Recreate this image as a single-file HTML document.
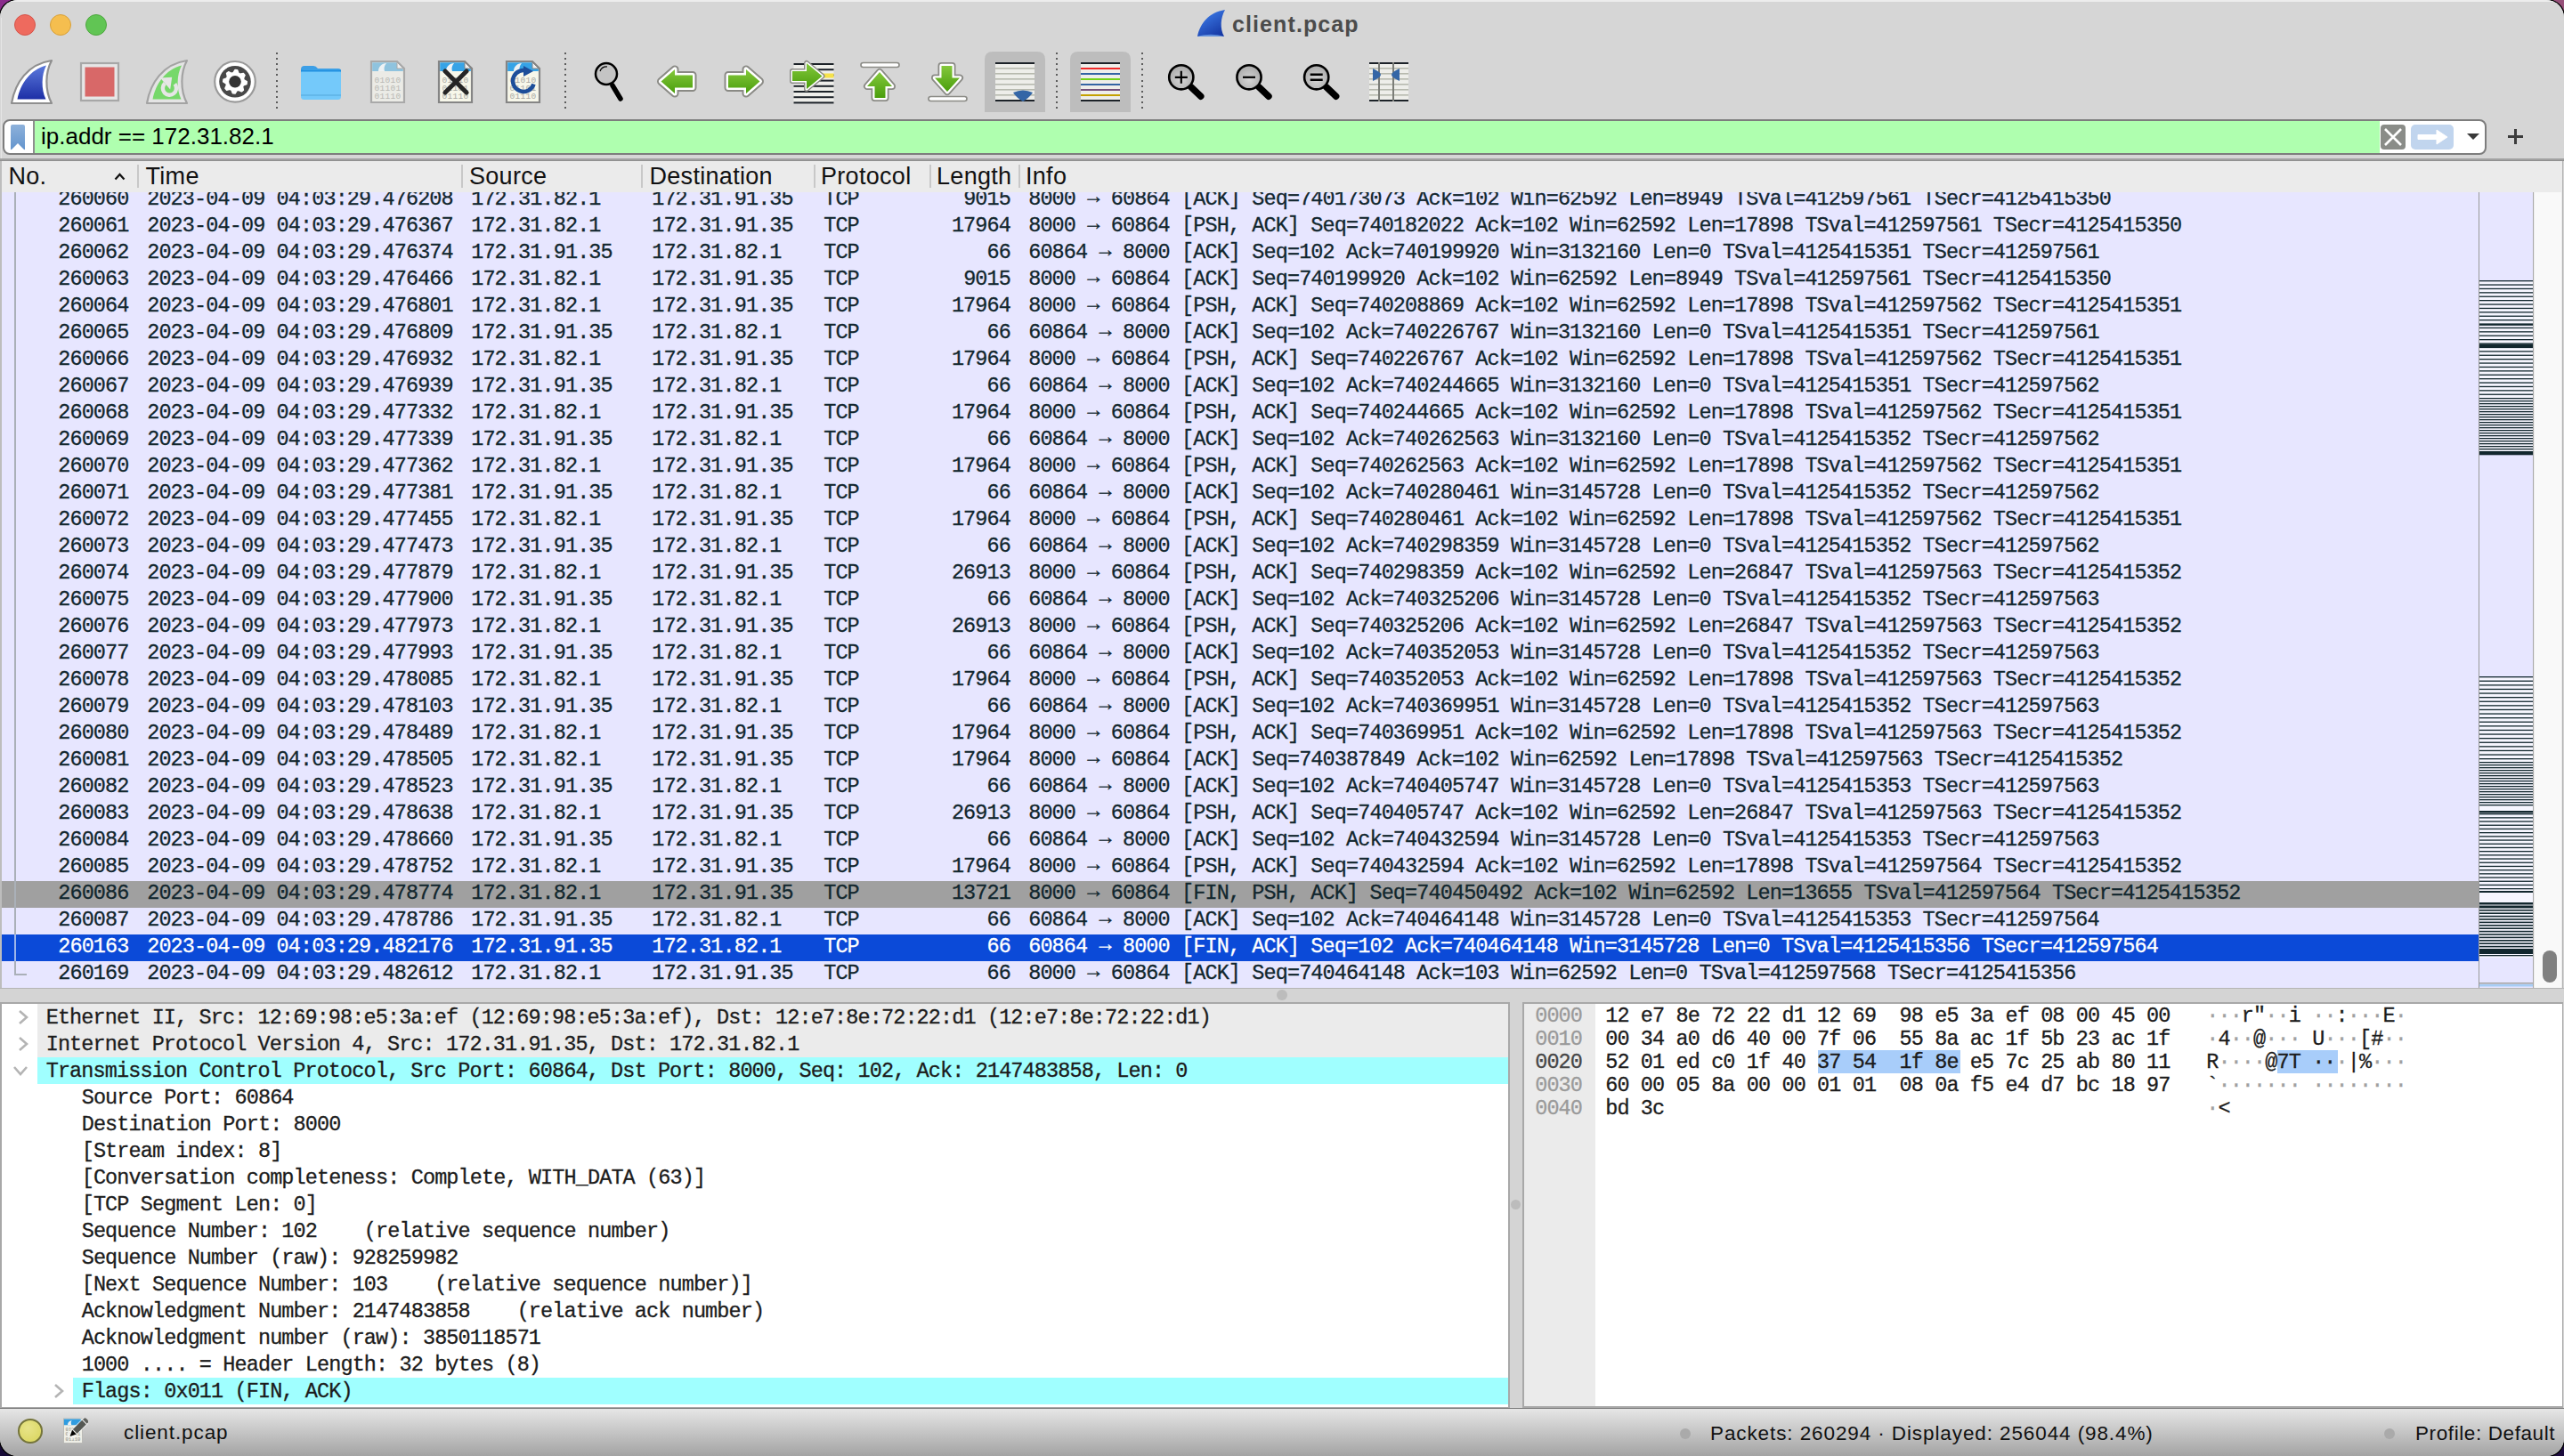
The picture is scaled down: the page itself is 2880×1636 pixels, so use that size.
<!DOCTYPE html><html><head><meta charset="utf-8"><title>client.pcap</title><style>
*{margin:0;padding:0;box-sizing:border-box}
html,body{width:2880px;height:1636px;overflow:hidden}
body{position:relative;background:#1a0b3a;font-family:"Liberation Sans",sans-serif}
#win{position:absolute;left:0;top:0;width:2880px;height:1636px;border-radius:20px;overflow:hidden;background:#d6d6d6;box-shadow:0 0 0 1.5px #000}
.a{position:absolute}
.t{position:absolute;white-space:pre;font-family:"Liberation Sans",sans-serif}
.m{position:absolute;white-space:pre;-webkit-text-stroke:0.3px currentColor;font-family:"Liberation Mono",monospace;font-size:23.5px;letter-spacing:-0.887px}
</style></head><body><div class="a" style="left:0;top:0;width:40px;height:40px;background:#8a2a8c"></div><div class="a" style="left:2840px;top:0;width:40px;height:40px;background:#97507a"></div><div class="a" style="left:0;top:1596px;width:40px;height:40px;background:#170a36"></div><div class="a" style="left:2840px;top:1596px;width:40px;height:40px;background:#1c0b3e"></div><div id="win"><div class="a" style="left:0;top:0;width:2880px;height:179px;background:#d6d6d6;border-top:2px solid #ededed"></div><div class="a" style="left:1px;top:20px;width:1px;height:159px;background:#e6e6e6"></div><div class="a" style="left:16px;top:15.8px;width:24px;height:24px;border-radius:50%;background:#ee6a5e;border:1px solid #d5544a"></div><div class="a" style="left:56px;top:15.8px;width:24px;height:24px;border-radius:50%;background:#f5be4f;border:1px solid #d7a03b"></div><div class="a" style="left:96px;top:15.8px;width:24px;height:24px;border-radius:50%;background:#61c554;border:1px solid #4ea73f"></div><div class="a" style="left:1344px;top:10px;width:33px;height:32px"><svg width="33" height="32" viewBox="0 0 33 32"><defs><linearGradient id="tg" x1="0.2" y1="0" x2="0.8" y2="1"><stop offset="0" stop-color="#3f80ec"/><stop offset="1" stop-color="#1536a2"/></linearGradient></defs><path d="M1,31 C4,16 14,4 32,1 C27,10 26,22 31,31 Z" fill="url(#tg)"/><path d="M1,31 C10,28 22,28 31,31 Z" fill="#7fb0f0" opacity="0.7"/></svg></div><div class="t" style="left:1384.00px;top:13.87px;font-size:25px;line-height:27.93px;color:#4b4b4b;font-weight:bold;letter-spacing:1.1px;">client.pcap</div><svg class="a" style="left:0;top:0" width="1600" height="130" viewBox="0 0 1600 130"><defs><linearGradient id="bg1" x1="0" y1="0" x2="0" y2="1"><stop offset="0" stop-color="#5b79dc"/><stop offset="1" stop-color="#1d2fa6"/></linearGradient><linearGradient id="gg" x1="0" y1="0" x2="0" y2="1"><stop offset="0" stop-color="#84c83c"/><stop offset="1" stop-color="#4a9e0c"/></linearGradient><radialGradient id="zg" cx="0.5" cy="0.6" r="0.6"><stop offset="0" stop-color="#d6d6d6"/><stop offset="1" stop-color="#a8a8a8"/></radialGradient></defs><path d="M13,116 C17,93 31,72 58,68 C51,81 50,101 58,116 Z" fill="#ffffff" stroke="#8f8f8f" stroke-width="2.2" stroke-linejoin="round"/><path d="M19.5,111.5 C23,94 34,78 52,73.5 C46.5,84 46,100 51.5,111.5 Z" fill="url(#bg1)"/><rect x="91" y="71" width="42" height="42" fill="#e6e6e6" stroke="#a7a7a7" stroke-width="2.2"/><rect x="95.5" y="75.5" width="33" height="33" fill="#d86868"/><path d="M165,116 C169,93 183,72 210,68 C203,81 202,101 210,116 Z" fill="#e4e4e4" stroke="#a3a3a3" stroke-width="2.2" stroke-linejoin="round"/><path d="M171.5,111.5 C175,94 186,78 204,73.5 C198.5,84 198,100 203.5,111.5 Z" fill="#76d86a"/><path d="M185.2,93.6 A7.6,7.6 0 1,0 196.4,94.4" fill="none" stroke="#e6e6e6" stroke-width="4.4"/><path d="M180,87.6 L193.2,86.8 L191.2,100.4 Z" fill="#e6e6e6"/><circle cx="264" cy="91.8" r="22.8" fill="#fff" stroke="#9a9a9a" stroke-width="2.2"/><circle cx="264" cy="91.8" r="17.8" fill="#484848"/><polygon points="262.01,81.80 264.00,78.60 266.58,78.85 267.90,82.38 269.67,83.32 273.33,82.47 274.98,84.47 273.42,87.90 274.00,89.81 277.20,91.80 276.95,94.38 273.42,95.70 272.48,97.47 273.33,101.13 271.33,102.78 267.90,101.22 265.99,101.80 264.00,105.00 261.42,104.75 260.10,101.22 258.33,100.28 254.67,101.13 253.02,99.13 254.58,95.70 254.00,93.79 250.80,91.80 251.05,89.22 254.58,87.90 255.52,86.13 254.67,82.47 256.67,80.82 260.10,82.38" fill="#fff" stroke="#fff" stroke-width="1.6" stroke-linejoin="round"/><circle cx="264" cy="91.8" r="6.8" fill="#333"/><path d="M338,78 Q338,74 342,74 H352 Q355,74 357,77 H380 Q383,77 383,80 V84 H338 Z" fill="#3d9fe6"/><rect x="338" y="78.5" width="45" height="33.5" rx="3.5" fill="#74c9fa"/><rect x="338" y="78.5" width="45" height="2" fill="#1f8fe0"/><rect x="338" y="106" width="45" height="2" fill="#63b8ea"/><path d="M417,69 H446 L454,77 V115 H417 Z" fill="#ebebe6" stroke="#a9a9a9" stroke-width="2.2"/><path d="M418.2,70.2 H445.5 L452.8,77.5 V80 H418.2 Z" fill="#8fc3de"/><path d="M446,70 V77 H453 Z" fill="#f0f0f0" stroke="#a9a9a9" stroke-width="1"/><path d="M425,80 C425,75 429,71 434,71 C431.5,74 431,77 432,80 Z" fill="#eef2f4"/><text x="435.5" y="93" text-anchor="middle" font-family="Liberation Mono" font-size="9.5" fill="#b8b8b4" letter-spacing="0.3">01010</text><text x="435.5" y="102" text-anchor="middle" font-family="Liberation Mono" font-size="9.5" fill="#b8b8b4" letter-spacing="0.3">01101</text><text x="435.5" y="111" text-anchor="middle" font-family="Liberation Mono" font-size="9.5" fill="#b8b8b4" letter-spacing="0.3">01110</text><path d="M493,69 H522 L530,77 V115 H493 Z" fill="#f7f7ea" stroke="#858585" stroke-width="2.2"/><path d="M494.2,70.2 H521.5 L528.8,77.5 V80 H494.2 Z" fill="#36a3e6"/><path d="M522,70 V77 H529 Z" fill="#f0f0f0" stroke="#858585" stroke-width="1"/><path d="M501,80 C501,75 505,71 510,71 C507.5,74 507,77 508,80 Z" fill="#eef2f4"/><text x="511.5" y="93" text-anchor="middle" font-family="Liberation Mono" font-size="9.5" fill="#a9a9a4" letter-spacing="0.3">01010</text><text x="511.5" y="102" text-anchor="middle" font-family="Liberation Mono" font-size="9.5" fill="#a9a9a4" letter-spacing="0.3">01101</text><text x="511.5" y="111" text-anchor="middle" font-family="Liberation Mono" font-size="9.5" fill="#a9a9a4" letter-spacing="0.3">01110</text><path d="M500,80 L524,104 M524,80 L500,104" stroke="#252525" stroke-width="5" stroke-linecap="round"/><path d="M569,69 H598 L606,77 V115 H569 Z" fill="#f7f7ea" stroke="#858585" stroke-width="2.2"/><path d="M570.2,70.2 H597.5 L604.8,77.5 V80 H570.2 Z" fill="#36a3e6"/><path d="M598,70 V77 H605 Z" fill="#f0f0f0" stroke="#858585" stroke-width="1"/><path d="M577,80 C577,75 581,71 586,71 C583.5,74 583,77 584,80 Z" fill="#eef2f4"/><text x="587.5" y="93" text-anchor="middle" font-family="Liberation Mono" font-size="9.5" fill="#a9a9a4" letter-spacing="0.3">01010</text><text x="587.5" y="102" text-anchor="middle" font-family="Liberation Mono" font-size="9.5" fill="#a9a9a4" letter-spacing="0.3">01101</text><text x="587.5" y="111" text-anchor="middle" font-family="Liberation Mono" font-size="9.5" fill="#a9a9a4" letter-spacing="0.3">01110</text><path d="M593,80 A12,12 0 1,0 599.5,94.5" fill="none" stroke="#1d4e9a" stroke-width="4.5"/><path d="M588,74 L599,80 L588,86 Z" fill="#1d4e9a"/><line x1="688" y1="96" x2="697" y2="111" stroke="#000" stroke-width="5.5" stroke-linecap="round"/><circle cx="681" cy="83" r="12" fill="#c4c4c4" stroke="#000" stroke-width="2.5"/><path d="M674,80 A8,8 0 0,1 682,75" fill="none" stroke="#000" stroke-width="1.2"/><path d="M742.5,91.5 L758,78 V84.5 H778 V98.5 H758 V105 Z" fill="none" stroke="#8a8a85" stroke-width="9" stroke-linejoin="round"/><path d="M742.5,91.5 L758,78 V84.5 H778 V98.5 H758 V105 Z" fill="none" stroke="#fff" stroke-width="5" stroke-linejoin="round"/><path d="M742.5,91.5 L758,78 V84.5 H778 V98.5 H758 V105 Z" fill="url(#gg)"/><path d="M853.5,91.5 L838,78 V84.5 H818 V98.5 H838 V105 Z" fill="none" stroke="#8a8a85" stroke-width="9" stroke-linejoin="round"/><path d="M853.5,91.5 L838,78 V84.5 H818 V98.5 H838 V105 Z" fill="none" stroke="#fff" stroke-width="5" stroke-linejoin="round"/><path d="M853.5,91.5 L838,78 V84.5 H818 V98.5 H838 V105 Z" fill="url(#gg)"/><rect x="891.5" y="71" width="45" height="45" fill="#eeeeea"/><rect x="891.5" y="71.0" width="45" height="2" fill="#1c2228"/><rect x="891.5" y="77.2" width="45" height="2" fill="#1c2228"/><rect x="891.5" y="83.4" width="45" height="2" fill="#1c2228"/><rect x="891.5" y="89.6" width="45" height="2" fill="#1c2228"/><rect x="891.5" y="95.8" width="45" height="2" fill="#1c2228"/><rect x="891.5" y="102.0" width="45" height="2" fill="#1c2228"/><rect x="891.5" y="108.2" width="45" height="2" fill="#1c2228"/><rect x="891.5" y="114.4" width="45" height="2" fill="#1c2228"/><rect x="924" y="82.5" width="12.5" height="5" fill="#f6e24a"/><path d="M923.5,85.5 L906,71 V80 H890 V91 H906 V100 Z" fill="none" stroke="#8a8a85" stroke-width="6" stroke-linejoin="round"/><path d="M923.5,85.5 L906,71 V80 H890 V91 H906 V100 Z" fill="none" stroke="#fff" stroke-width="3" stroke-linejoin="round"/><path d="M923.5,85.5 L906,71 V80 H890 V91 H906 V100 Z" fill="url(#gg)"/><rect x="967" y="70.5" width="43" height="5" rx="2.5" fill="#fff" stroke="#8a8a85" stroke-width="1.6"/><path d="M988,81 L974,97 H982.5 V110 H994.5 V97 H1002 Z" fill="none" stroke="#8a8a85" stroke-width="8" stroke-linejoin="round"/><path d="M988,81 L974,97 H982.5 V110 H994.5 V97 H1002 Z" fill="none" stroke="#fff" stroke-width="4.5" stroke-linejoin="round"/><path d="M988,81 L974,97 H982.5 V110 H994.5 V97 H1002 Z" fill="url(#gg)"/><rect x="1043" y="108.5" width="43" height="5" rx="2.5" fill="#fff" stroke="#8a8a85" stroke-width="1.6"/><path d="M1064,103 L1078,87.5 H1069.5 V74 H1057.5 V87.5 H1050 Z" fill="none" stroke="#8a8a85" stroke-width="8" stroke-linejoin="round"/><path d="M1064,103 L1078,87.5 H1069.5 V74 H1057.5 V87.5 H1050 Z" fill="none" stroke="#fff" stroke-width="4.5" stroke-linejoin="round"/><path d="M1064,103 L1078,87.5 H1069.5 V74 H1057.5 V87.5 H1050 Z" fill="url(#gg)"/><path d="M1106,126 V67 Q1106,58 1115,58 H1165 Q1174,58 1174,67 V126 Z" fill="#bdbdbd"/><rect x="1118" y="70" width="44" height="44" fill="#eeeeea"/><rect x="1118" y="70" width="44" height="2" fill="#1c2228"/><rect x="1118" y="112" width="44" height="2" fill="#1c2228"/><rect x="1118" y="76" width="44" height="1.6" fill="#b7b9ae"/><rect x="1118" y="82" width="44" height="1.6" fill="#b7b9ae"/><rect x="1118" y="88" width="44" height="1.6" fill="#b7b9ae"/><rect x="1118" y="94" width="44" height="1.6" fill="#b7b9ae"/><rect x="1118" y="100" width="44" height="1.6" fill="#b7b9ae"/><rect x="1118" y="106" width="44" height="1.6" fill="#b7b9ae"/><path d="M1138,104 Q1149,99 1160,104 Q1156,110 1149,114 Q1142,110 1138,104 Z" fill="#3466a6"/><path d="M1202,126 V67 Q1202,58 1211,58 H1261 Q1270,58 1270,67 V126 Z" fill="#bdbdbd"/><rect x="1214" y="70" width="44" height="44" fill="#eeeeea"/><rect x="1214" y="70" width="44" height="2" fill="#1c2228"/><rect x="1214" y="76" width="44" height="2" fill="#ef2929"/><rect x="1214" y="82" width="44" height="2" fill="#3465a4"/><rect x="1214" y="88" width="44" height="2" fill="#73d216"/><rect x="1214" y="94" width="44" height="2" fill="#3465a4"/><rect x="1214" y="100" width="44" height="2" fill="#75507b"/><rect x="1214" y="106" width="44" height="2" fill="#c4a000"/><rect x="1214" y="112" width="44" height="2" fill="#1c2228"/><line x1="1337.8" y1="97.8" x2="1348.8" y2="108.3" stroke="#000" stroke-width="7.4" stroke-linecap="round"/><circle cx="1326.8" cy="86.8" r="13.6" fill="url(#zg)" stroke="#000" stroke-width="2.6"/><path d="M1319.8,86.8 H1333.8 M1326.8,79.8 V93.8" stroke="#000" stroke-width="2.2"/><line x1="1414" y1="97.8" x2="1425" y2="108.3" stroke="#000" stroke-width="7.4" stroke-linecap="round"/><circle cx="1403" cy="86.8" r="13.6" fill="url(#zg)" stroke="#000" stroke-width="2.6"/><path d="M1396,86.8 H1410" stroke="#000" stroke-width="2.2"/><line x1="1489.7" y1="97.8" x2="1500.7" y2="108.3" stroke="#000" stroke-width="7.4" stroke-linecap="round"/><circle cx="1478.7" cy="86.8" r="13.6" fill="url(#zg)" stroke="#000" stroke-width="2.6"/><path d="M1471.7,83.8 H1485.7 M1471.7,89.8 H1485.7" stroke="#000" stroke-width="2.6"/><rect x="1538" y="70" width="44" height="44" fill="#eeeeea"/><rect x="1538" y="76" width="44" height="1.6" fill="#b7b9ae"/><rect x="1538" y="82" width="44" height="1.6" fill="#b7b9ae"/><rect x="1538" y="88" width="44" height="1.6" fill="#b7b9ae"/><rect x="1538" y="94" width="44" height="1.6" fill="#b7b9ae"/><rect x="1538" y="100" width="44" height="1.6" fill="#b7b9ae"/><rect x="1538" y="106" width="44" height="1.6" fill="#b7b9ae"/><rect x="1538" y="70" width="44" height="2" fill="#1c2228"/><rect x="1538" y="112" width="44" height="2" fill="#1c2228"/><rect x="1548" y="70" width="2" height="44" fill="#7b7d78"/><rect x="1564" y="70" width="2" height="44" fill="#7b7d78"/><path d="M1542,77 Q1551,81 1551,84 Q1551,87 1542,91 Z" fill="#3466a6"/><path d="M1572,77 Q1563,81 1563,84 Q1563,87 1572,91 Z" fill="#3466a6"/></svg><div class="a" style="left:310px;top:59.0px;width:2px;height:2px;background:#5c5c5c"></div><div class="a" style="left:310px;top:65.1px;width:2px;height:2px;background:#5c5c5c"></div><div class="a" style="left:310px;top:71.2px;width:2px;height:2px;background:#5c5c5c"></div><div class="a" style="left:310px;top:77.3px;width:2px;height:2px;background:#5c5c5c"></div><div class="a" style="left:310px;top:83.4px;width:2px;height:2px;background:#5c5c5c"></div><div class="a" style="left:310px;top:89.5px;width:2px;height:2px;background:#5c5c5c"></div><div class="a" style="left:310px;top:95.6px;width:2px;height:2px;background:#5c5c5c"></div><div class="a" style="left:310px;top:101.7px;width:2px;height:2px;background:#5c5c5c"></div><div class="a" style="left:310px;top:107.8px;width:2px;height:2px;background:#5c5c5c"></div><div class="a" style="left:310px;top:113.9px;width:2px;height:2px;background:#5c5c5c"></div><div class="a" style="left:310px;top:120.0px;width:2px;height:2px;background:#5c5c5c"></div><div class="a" style="left:633.5px;top:59.0px;width:2px;height:2px;background:#5c5c5c"></div><div class="a" style="left:633.5px;top:65.1px;width:2px;height:2px;background:#5c5c5c"></div><div class="a" style="left:633.5px;top:71.2px;width:2px;height:2px;background:#5c5c5c"></div><div class="a" style="left:633.5px;top:77.3px;width:2px;height:2px;background:#5c5c5c"></div><div class="a" style="left:633.5px;top:83.4px;width:2px;height:2px;background:#5c5c5c"></div><div class="a" style="left:633.5px;top:89.5px;width:2px;height:2px;background:#5c5c5c"></div><div class="a" style="left:633.5px;top:95.6px;width:2px;height:2px;background:#5c5c5c"></div><div class="a" style="left:633.5px;top:101.7px;width:2px;height:2px;background:#5c5c5c"></div><div class="a" style="left:633.5px;top:107.8px;width:2px;height:2px;background:#5c5c5c"></div><div class="a" style="left:633.5px;top:113.9px;width:2px;height:2px;background:#5c5c5c"></div><div class="a" style="left:633.5px;top:120.0px;width:2px;height:2px;background:#5c5c5c"></div><div class="a" style="left:1186px;top:59.0px;width:2px;height:2px;background:#5c5c5c"></div><div class="a" style="left:1186px;top:65.1px;width:2px;height:2px;background:#5c5c5c"></div><div class="a" style="left:1186px;top:71.2px;width:2px;height:2px;background:#5c5c5c"></div><div class="a" style="left:1186px;top:77.3px;width:2px;height:2px;background:#5c5c5c"></div><div class="a" style="left:1186px;top:83.4px;width:2px;height:2px;background:#5c5c5c"></div><div class="a" style="left:1186px;top:89.5px;width:2px;height:2px;background:#5c5c5c"></div><div class="a" style="left:1186px;top:95.6px;width:2px;height:2px;background:#5c5c5c"></div><div class="a" style="left:1186px;top:101.7px;width:2px;height:2px;background:#5c5c5c"></div><div class="a" style="left:1186px;top:107.8px;width:2px;height:2px;background:#5c5c5c"></div><div class="a" style="left:1186px;top:113.9px;width:2px;height:2px;background:#5c5c5c"></div><div class="a" style="left:1186px;top:120.0px;width:2px;height:2px;background:#5c5c5c"></div><div class="a" style="left:1282px;top:59.0px;width:2px;height:2px;background:#5c5c5c"></div><div class="a" style="left:1282px;top:65.1px;width:2px;height:2px;background:#5c5c5c"></div><div class="a" style="left:1282px;top:71.2px;width:2px;height:2px;background:#5c5c5c"></div><div class="a" style="left:1282px;top:77.3px;width:2px;height:2px;background:#5c5c5c"></div><div class="a" style="left:1282px;top:83.4px;width:2px;height:2px;background:#5c5c5c"></div><div class="a" style="left:1282px;top:89.5px;width:2px;height:2px;background:#5c5c5c"></div><div class="a" style="left:1282px;top:95.6px;width:2px;height:2px;background:#5c5c5c"></div><div class="a" style="left:1282px;top:101.7px;width:2px;height:2px;background:#5c5c5c"></div><div class="a" style="left:1282px;top:107.8px;width:2px;height:2px;background:#5c5c5c"></div><div class="a" style="left:1282px;top:113.9px;width:2px;height:2px;background:#5c5c5c"></div><div class="a" style="left:1282px;top:120.0px;width:2px;height:2px;background:#5c5c5c"></div><div class="a" style="left:3px;top:134px;width:2790px;height:40px;border:2px solid #7d7d7d;border-radius:8px;background:#fff;overflow:hidden"><div class="a" style="left:32px;top:0;width:2px;height:36px;background:#8e8e8e"></div><div class="a" style="left:34px;top:0;width:2634px;height:36px;background:#afffaf"></div><div class="a" style="left:7px;top:4px;width:17px;height:29px"><svg width="17" height="29" viewBox="0 0 17 29"><defs><linearGradient id="bk" x1="0" y1="0" x2="0" y2="1"><stop offset="0" stop-color="#8db1db"/><stop offset="1" stop-color="#6394cd"/></linearGradient></defs><path d="M0,2 Q0,0 2,0 H14 Q16,0 16,2 V27.5 Q16,29 14.5,27.5 L8,21 L1.5,27.5 Q0,29 0,27.5 Z" fill="url(#bk)"/></svg></div></div><div class="t" style="left:46.00px;top:139.46px;font-size:26px;line-height:29.05px;color:#000;font-weight:normal;letter-spacing:0px;">ip.addr == 172.31.82.1</div><div class="a" style="left:2674px;top:140px;width:28px;height:28px"><svg width="28" height="28" viewBox="0 0 28 28"><rect x="0" y="0" width="28" height="28" rx="4" fill="#8a8c88"/><path d="M5,5 L23,23 M23,5 L5,23" stroke="#fff" stroke-width="2.6"/></svg></div><div class="a" style="left:2708px;top:140px;width:48px;height:28px"><svg width="48" height="28" viewBox="0 0 48 28"><rect x="0" y="0" width="48" height="28" rx="5" fill="#c1d5ee"/><path d="M8,11.5 H29 V6 L41,14 L29,22 V16.5 H8 Z" fill="#fff" stroke="#fff" stroke-width="1" stroke-linejoin="round"/></svg></div><div class="a" style="left:2771px;top:150px;width:0;height:0;border-left:7px solid transparent;border-right:7px solid transparent;border-top:7px solid #3a3a3a"></div><div class="a" style="left:2817px;top:152px;width:17px;height:3.4px;background:#3c3c3c"></div><div class="a" style="left:2824px;top:145px;width:3.4px;height:17px;background:#3c3c3c"></div><div class="a" style="left:0;top:178px;width:2880px;height:3px;background:#a2a2a2;border-bottom:1px solid #8f8f8f"></div><div class="a" style="left:0;top:181px;width:2880px;height:929px;background:#bdbdbd"></div><div class="a" style="left:2px;top:181px;width:2876px;height:929px;background:#e7e6ff;overflow:hidden"><div class="m" style="left:63.21px;top:30.44px;line-height:26.62px;color:#12272e;">260060</div><div class="m" style="left:163.20px;top:30.44px;line-height:26.62px;color:#12272e;">2023-04-09 04:03:29.476208</div><div class="m" style="left:527.20px;top:30.44px;line-height:26.62px;color:#12272e;">172.31.82.1</div><div class="m" style="left:730.20px;top:30.44px;line-height:26.62px;color:#12272e;">172.31.91.35</div><div class="m" style="left:923.20px;top:30.44px;line-height:26.62px;color:#12272e;">TCP</div><div class="m" style="left:1080.14px;top:30.44px;line-height:26.62px;color:#12272e;">9015</div><div class="m" style="left:1153.20px;top:30.44px;line-height:26.62px;color:#12272e;">8000 <span style="position:relative;top:-2px">→</span> 60864 [ACK] Seq=740173073 Ack=102 Win=62592 Len=8949 TSval=412597561 TSecr=4125415350</div><div class="m" style="left:63.21px;top:60.44px;line-height:26.62px;color:#12272e;">260061</div><div class="m" style="left:163.20px;top:60.44px;line-height:26.62px;color:#12272e;">2023-04-09 04:03:29.476367</div><div class="m" style="left:527.20px;top:60.44px;line-height:26.62px;color:#12272e;">172.31.82.1</div><div class="m" style="left:730.20px;top:60.44px;line-height:26.62px;color:#12272e;">172.31.91.35</div><div class="m" style="left:923.20px;top:60.44px;line-height:26.62px;color:#12272e;">TCP</div><div class="m" style="left:1066.92px;top:60.44px;line-height:26.62px;color:#12272e;">17964</div><div class="m" style="left:1153.20px;top:60.44px;line-height:26.62px;color:#12272e;">8000 <span style="position:relative;top:-2px">→</span> 60864 [PSH, ACK] Seq=740182022 Ack=102 Win=62592 Len=17898 TSval=412597561 TSecr=4125415350</div><div class="m" style="left:63.21px;top:90.44px;line-height:26.62px;color:#12272e;">260062</div><div class="m" style="left:163.20px;top:90.44px;line-height:26.62px;color:#12272e;">2023-04-09 04:03:29.476374</div><div class="m" style="left:527.20px;top:90.44px;line-height:26.62px;color:#12272e;">172.31.91.35</div><div class="m" style="left:730.20px;top:90.44px;line-height:26.62px;color:#12272e;">172.31.82.1</div><div class="m" style="left:923.20px;top:90.44px;line-height:26.62px;color:#12272e;">TCP</div><div class="m" style="left:1106.57px;top:90.44px;line-height:26.62px;color:#12272e;">66</div><div class="m" style="left:1153.20px;top:90.44px;line-height:26.62px;color:#12272e;">60864 <span style="position:relative;top:-2px">→</span> 8000 [ACK] Seq=102 Ack=740199920 Win=3132160 Len=0 TSval=4125415351 TSecr=412597561</div><div class="m" style="left:63.21px;top:120.44px;line-height:26.62px;color:#12272e;">260063</div><div class="m" style="left:163.20px;top:120.44px;line-height:26.62px;color:#12272e;">2023-04-09 04:03:29.476466</div><div class="m" style="left:527.20px;top:120.44px;line-height:26.62px;color:#12272e;">172.31.82.1</div><div class="m" style="left:730.20px;top:120.44px;line-height:26.62px;color:#12272e;">172.31.91.35</div><div class="m" style="left:923.20px;top:120.44px;line-height:26.62px;color:#12272e;">TCP</div><div class="m" style="left:1080.14px;top:120.44px;line-height:26.62px;color:#12272e;">9015</div><div class="m" style="left:1153.20px;top:120.44px;line-height:26.62px;color:#12272e;">8000 <span style="position:relative;top:-2px">→</span> 60864 [ACK] Seq=740199920 Ack=102 Win=62592 Len=8949 TSval=412597561 TSecr=4125415350</div><div class="m" style="left:63.21px;top:150.44px;line-height:26.62px;color:#12272e;">260064</div><div class="m" style="left:163.20px;top:150.44px;line-height:26.62px;color:#12272e;">2023-04-09 04:03:29.476801</div><div class="m" style="left:527.20px;top:150.44px;line-height:26.62px;color:#12272e;">172.31.82.1</div><div class="m" style="left:730.20px;top:150.44px;line-height:26.62px;color:#12272e;">172.31.91.35</div><div class="m" style="left:923.20px;top:150.44px;line-height:26.62px;color:#12272e;">TCP</div><div class="m" style="left:1066.92px;top:150.44px;line-height:26.62px;color:#12272e;">17964</div><div class="m" style="left:1153.20px;top:150.44px;line-height:26.62px;color:#12272e;">8000 <span style="position:relative;top:-2px">→</span> 60864 [PSH, ACK] Seq=740208869 Ack=102 Win=62592 Len=17898 TSval=412597562 TSecr=4125415351</div><div class="m" style="left:63.21px;top:180.44px;line-height:26.62px;color:#12272e;">260065</div><div class="m" style="left:163.20px;top:180.44px;line-height:26.62px;color:#12272e;">2023-04-09 04:03:29.476809</div><div class="m" style="left:527.20px;top:180.44px;line-height:26.62px;color:#12272e;">172.31.91.35</div><div class="m" style="left:730.20px;top:180.44px;line-height:26.62px;color:#12272e;">172.31.82.1</div><div class="m" style="left:923.20px;top:180.44px;line-height:26.62px;color:#12272e;">TCP</div><div class="m" style="left:1106.57px;top:180.44px;line-height:26.62px;color:#12272e;">66</div><div class="m" style="left:1153.20px;top:180.44px;line-height:26.62px;color:#12272e;">60864 <span style="position:relative;top:-2px">→</span> 8000 [ACK] Seq=102 Ack=740226767 Win=3132160 Len=0 TSval=4125415351 TSecr=412597561</div><div class="m" style="left:63.21px;top:210.44px;line-height:26.62px;color:#12272e;">260066</div><div class="m" style="left:163.20px;top:210.44px;line-height:26.62px;color:#12272e;">2023-04-09 04:03:29.476932</div><div class="m" style="left:527.20px;top:210.44px;line-height:26.62px;color:#12272e;">172.31.82.1</div><div class="m" style="left:730.20px;top:210.44px;line-height:26.62px;color:#12272e;">172.31.91.35</div><div class="m" style="left:923.20px;top:210.44px;line-height:26.62px;color:#12272e;">TCP</div><div class="m" style="left:1066.92px;top:210.44px;line-height:26.62px;color:#12272e;">17964</div><div class="m" style="left:1153.20px;top:210.44px;line-height:26.62px;color:#12272e;">8000 <span style="position:relative;top:-2px">→</span> 60864 [PSH, ACK] Seq=740226767 Ack=102 Win=62592 Len=17898 TSval=412597562 TSecr=4125415351</div><div class="m" style="left:63.21px;top:240.44px;line-height:26.62px;color:#12272e;">260067</div><div class="m" style="left:163.20px;top:240.44px;line-height:26.62px;color:#12272e;">2023-04-09 04:03:29.476939</div><div class="m" style="left:527.20px;top:240.44px;line-height:26.62px;color:#12272e;">172.31.91.35</div><div class="m" style="left:730.20px;top:240.44px;line-height:26.62px;color:#12272e;">172.31.82.1</div><div class="m" style="left:923.20px;top:240.44px;line-height:26.62px;color:#12272e;">TCP</div><div class="m" style="left:1106.57px;top:240.44px;line-height:26.62px;color:#12272e;">66</div><div class="m" style="left:1153.20px;top:240.44px;line-height:26.62px;color:#12272e;">60864 <span style="position:relative;top:-2px">→</span> 8000 [ACK] Seq=102 Ack=740244665 Win=3132160 Len=0 TSval=4125415351 TSecr=412597562</div><div class="m" style="left:63.21px;top:270.44px;line-height:26.62px;color:#12272e;">260068</div><div class="m" style="left:163.20px;top:270.44px;line-height:26.62px;color:#12272e;">2023-04-09 04:03:29.477332</div><div class="m" style="left:527.20px;top:270.44px;line-height:26.62px;color:#12272e;">172.31.82.1</div><div class="m" style="left:730.20px;top:270.44px;line-height:26.62px;color:#12272e;">172.31.91.35</div><div class="m" style="left:923.20px;top:270.44px;line-height:26.62px;color:#12272e;">TCP</div><div class="m" style="left:1066.92px;top:270.44px;line-height:26.62px;color:#12272e;">17964</div><div class="m" style="left:1153.20px;top:270.44px;line-height:26.62px;color:#12272e;">8000 <span style="position:relative;top:-2px">→</span> 60864 [PSH, ACK] Seq=740244665 Ack=102 Win=62592 Len=17898 TSval=412597562 TSecr=4125415351</div><div class="m" style="left:63.21px;top:300.44px;line-height:26.62px;color:#12272e;">260069</div><div class="m" style="left:163.20px;top:300.44px;line-height:26.62px;color:#12272e;">2023-04-09 04:03:29.477339</div><div class="m" style="left:527.20px;top:300.44px;line-height:26.62px;color:#12272e;">172.31.91.35</div><div class="m" style="left:730.20px;top:300.44px;line-height:26.62px;color:#12272e;">172.31.82.1</div><div class="m" style="left:923.20px;top:300.44px;line-height:26.62px;color:#12272e;">TCP</div><div class="m" style="left:1106.57px;top:300.44px;line-height:26.62px;color:#12272e;">66</div><div class="m" style="left:1153.20px;top:300.44px;line-height:26.62px;color:#12272e;">60864 <span style="position:relative;top:-2px">→</span> 8000 [ACK] Seq=102 Ack=740262563 Win=3132160 Len=0 TSval=4125415352 TSecr=412597562</div><div class="m" style="left:63.21px;top:330.44px;line-height:26.62px;color:#12272e;">260070</div><div class="m" style="left:163.20px;top:330.44px;line-height:26.62px;color:#12272e;">2023-04-09 04:03:29.477362</div><div class="m" style="left:527.20px;top:330.44px;line-height:26.62px;color:#12272e;">172.31.82.1</div><div class="m" style="left:730.20px;top:330.44px;line-height:26.62px;color:#12272e;">172.31.91.35</div><div class="m" style="left:923.20px;top:330.44px;line-height:26.62px;color:#12272e;">TCP</div><div class="m" style="left:1066.92px;top:330.44px;line-height:26.62px;color:#12272e;">17964</div><div class="m" style="left:1153.20px;top:330.44px;line-height:26.62px;color:#12272e;">8000 <span style="position:relative;top:-2px">→</span> 60864 [PSH, ACK] Seq=740262563 Ack=102 Win=62592 Len=17898 TSval=412597562 TSecr=4125415351</div><div class="m" style="left:63.21px;top:360.44px;line-height:26.62px;color:#12272e;">260071</div><div class="m" style="left:163.20px;top:360.44px;line-height:26.62px;color:#12272e;">2023-04-09 04:03:29.477381</div><div class="m" style="left:527.20px;top:360.44px;line-height:26.62px;color:#12272e;">172.31.91.35</div><div class="m" style="left:730.20px;top:360.44px;line-height:26.62px;color:#12272e;">172.31.82.1</div><div class="m" style="left:923.20px;top:360.44px;line-height:26.62px;color:#12272e;">TCP</div><div class="m" style="left:1106.57px;top:360.44px;line-height:26.62px;color:#12272e;">66</div><div class="m" style="left:1153.20px;top:360.44px;line-height:26.62px;color:#12272e;">60864 <span style="position:relative;top:-2px">→</span> 8000 [ACK] Seq=102 Ack=740280461 Win=3145728 Len=0 TSval=4125415352 TSecr=412597562</div><div class="m" style="left:63.21px;top:390.44px;line-height:26.62px;color:#12272e;">260072</div><div class="m" style="left:163.20px;top:390.44px;line-height:26.62px;color:#12272e;">2023-04-09 04:03:29.477455</div><div class="m" style="left:527.20px;top:390.44px;line-height:26.62px;color:#12272e;">172.31.82.1</div><div class="m" style="left:730.20px;top:390.44px;line-height:26.62px;color:#12272e;">172.31.91.35</div><div class="m" style="left:923.20px;top:390.44px;line-height:26.62px;color:#12272e;">TCP</div><div class="m" style="left:1066.92px;top:390.44px;line-height:26.62px;color:#12272e;">17964</div><div class="m" style="left:1153.20px;top:390.44px;line-height:26.62px;color:#12272e;">8000 <span style="position:relative;top:-2px">→</span> 60864 [PSH, ACK] Seq=740280461 Ack=102 Win=62592 Len=17898 TSval=412597562 TSecr=4125415351</div><div class="m" style="left:63.21px;top:420.44px;line-height:26.62px;color:#12272e;">260073</div><div class="m" style="left:163.20px;top:420.44px;line-height:26.62px;color:#12272e;">2023-04-09 04:03:29.477473</div><div class="m" style="left:527.20px;top:420.44px;line-height:26.62px;color:#12272e;">172.31.91.35</div><div class="m" style="left:730.20px;top:420.44px;line-height:26.62px;color:#12272e;">172.31.82.1</div><div class="m" style="left:923.20px;top:420.44px;line-height:26.62px;color:#12272e;">TCP</div><div class="m" style="left:1106.57px;top:420.44px;line-height:26.62px;color:#12272e;">66</div><div class="m" style="left:1153.20px;top:420.44px;line-height:26.62px;color:#12272e;">60864 <span style="position:relative;top:-2px">→</span> 8000 [ACK] Seq=102 Ack=740298359 Win=3145728 Len=0 TSval=4125415352 TSecr=412597562</div><div class="m" style="left:63.21px;top:450.44px;line-height:26.62px;color:#12272e;">260074</div><div class="m" style="left:163.20px;top:450.44px;line-height:26.62px;color:#12272e;">2023-04-09 04:03:29.477879</div><div class="m" style="left:527.20px;top:450.44px;line-height:26.62px;color:#12272e;">172.31.82.1</div><div class="m" style="left:730.20px;top:450.44px;line-height:26.62px;color:#12272e;">172.31.91.35</div><div class="m" style="left:923.20px;top:450.44px;line-height:26.62px;color:#12272e;">TCP</div><div class="m" style="left:1066.92px;top:450.44px;line-height:26.62px;color:#12272e;">26913</div><div class="m" style="left:1153.20px;top:450.44px;line-height:26.62px;color:#12272e;">8000 <span style="position:relative;top:-2px">→</span> 60864 [PSH, ACK] Seq=740298359 Ack=102 Win=62592 Len=26847 TSval=412597563 TSecr=4125415352</div><div class="m" style="left:63.21px;top:480.44px;line-height:26.62px;color:#12272e;">260075</div><div class="m" style="left:163.20px;top:480.44px;line-height:26.62px;color:#12272e;">2023-04-09 04:03:29.477900</div><div class="m" style="left:527.20px;top:480.44px;line-height:26.62px;color:#12272e;">172.31.91.35</div><div class="m" style="left:730.20px;top:480.44px;line-height:26.62px;color:#12272e;">172.31.82.1</div><div class="m" style="left:923.20px;top:480.44px;line-height:26.62px;color:#12272e;">TCP</div><div class="m" style="left:1106.57px;top:480.44px;line-height:26.62px;color:#12272e;">66</div><div class="m" style="left:1153.20px;top:480.44px;line-height:26.62px;color:#12272e;">60864 <span style="position:relative;top:-2px">→</span> 8000 [ACK] Seq=102 Ack=740325206 Win=3145728 Len=0 TSval=4125415352 TSecr=412597563</div><div class="m" style="left:63.21px;top:510.44px;line-height:26.62px;color:#12272e;">260076</div><div class="m" style="left:163.20px;top:510.44px;line-height:26.62px;color:#12272e;">2023-04-09 04:03:29.477973</div><div class="m" style="left:527.20px;top:510.44px;line-height:26.62px;color:#12272e;">172.31.82.1</div><div class="m" style="left:730.20px;top:510.44px;line-height:26.62px;color:#12272e;">172.31.91.35</div><div class="m" style="left:923.20px;top:510.44px;line-height:26.62px;color:#12272e;">TCP</div><div class="m" style="left:1066.92px;top:510.44px;line-height:26.62px;color:#12272e;">26913</div><div class="m" style="left:1153.20px;top:510.44px;line-height:26.62px;color:#12272e;">8000 <span style="position:relative;top:-2px">→</span> 60864 [PSH, ACK] Seq=740325206 Ack=102 Win=62592 Len=26847 TSval=412597563 TSecr=4125415352</div><div class="m" style="left:63.21px;top:540.44px;line-height:26.62px;color:#12272e;">260077</div><div class="m" style="left:163.20px;top:540.44px;line-height:26.62px;color:#12272e;">2023-04-09 04:03:29.477993</div><div class="m" style="left:527.20px;top:540.44px;line-height:26.62px;color:#12272e;">172.31.91.35</div><div class="m" style="left:730.20px;top:540.44px;line-height:26.62px;color:#12272e;">172.31.82.1</div><div class="m" style="left:923.20px;top:540.44px;line-height:26.62px;color:#12272e;">TCP</div><div class="m" style="left:1106.57px;top:540.44px;line-height:26.62px;color:#12272e;">66</div><div class="m" style="left:1153.20px;top:540.44px;line-height:26.62px;color:#12272e;">60864 <span style="position:relative;top:-2px">→</span> 8000 [ACK] Seq=102 Ack=740352053 Win=3145728 Len=0 TSval=4125415352 TSecr=412597563</div><div class="m" style="left:63.21px;top:570.44px;line-height:26.62px;color:#12272e;">260078</div><div class="m" style="left:163.20px;top:570.44px;line-height:26.62px;color:#12272e;">2023-04-09 04:03:29.478085</div><div class="m" style="left:527.20px;top:570.44px;line-height:26.62px;color:#12272e;">172.31.82.1</div><div class="m" style="left:730.20px;top:570.44px;line-height:26.62px;color:#12272e;">172.31.91.35</div><div class="m" style="left:923.20px;top:570.44px;line-height:26.62px;color:#12272e;">TCP</div><div class="m" style="left:1066.92px;top:570.44px;line-height:26.62px;color:#12272e;">17964</div><div class="m" style="left:1153.20px;top:570.44px;line-height:26.62px;color:#12272e;">8000 <span style="position:relative;top:-2px">→</span> 60864 [PSH, ACK] Seq=740352053 Ack=102 Win=62592 Len=17898 TSval=412597563 TSecr=4125415352</div><div class="m" style="left:63.21px;top:600.44px;line-height:26.62px;color:#12272e;">260079</div><div class="m" style="left:163.20px;top:600.44px;line-height:26.62px;color:#12272e;">2023-04-09 04:03:29.478103</div><div class="m" style="left:527.20px;top:600.44px;line-height:26.62px;color:#12272e;">172.31.91.35</div><div class="m" style="left:730.20px;top:600.44px;line-height:26.62px;color:#12272e;">172.31.82.1</div><div class="m" style="left:923.20px;top:600.44px;line-height:26.62px;color:#12272e;">TCP</div><div class="m" style="left:1106.57px;top:600.44px;line-height:26.62px;color:#12272e;">66</div><div class="m" style="left:1153.20px;top:600.44px;line-height:26.62px;color:#12272e;">60864 <span style="position:relative;top:-2px">→</span> 8000 [ACK] Seq=102 Ack=740369951 Win=3145728 Len=0 TSval=4125415352 TSecr=412597563</div><div class="m" style="left:63.21px;top:630.44px;line-height:26.62px;color:#12272e;">260080</div><div class="m" style="left:163.20px;top:630.44px;line-height:26.62px;color:#12272e;">2023-04-09 04:03:29.478489</div><div class="m" style="left:527.20px;top:630.44px;line-height:26.62px;color:#12272e;">172.31.82.1</div><div class="m" style="left:730.20px;top:630.44px;line-height:26.62px;color:#12272e;">172.31.91.35</div><div class="m" style="left:923.20px;top:630.44px;line-height:26.62px;color:#12272e;">TCP</div><div class="m" style="left:1066.92px;top:630.44px;line-height:26.62px;color:#12272e;">17964</div><div class="m" style="left:1153.20px;top:630.44px;line-height:26.62px;color:#12272e;">8000 <span style="position:relative;top:-2px">→</span> 60864 [PSH, ACK] Seq=740369951 Ack=102 Win=62592 Len=17898 TSval=412597563 TSecr=4125415352</div><div class="m" style="left:63.21px;top:660.44px;line-height:26.62px;color:#12272e;">260081</div><div class="m" style="left:163.20px;top:660.44px;line-height:26.62px;color:#12272e;">2023-04-09 04:03:29.478505</div><div class="m" style="left:527.20px;top:660.44px;line-height:26.62px;color:#12272e;">172.31.82.1</div><div class="m" style="left:730.20px;top:660.44px;line-height:26.62px;color:#12272e;">172.31.91.35</div><div class="m" style="left:923.20px;top:660.44px;line-height:26.62px;color:#12272e;">TCP</div><div class="m" style="left:1066.92px;top:660.44px;line-height:26.62px;color:#12272e;">17964</div><div class="m" style="left:1153.20px;top:660.44px;line-height:26.62px;color:#12272e;">8000 <span style="position:relative;top:-2px">→</span> 60864 [ACK] Seq=740387849 Ack=102 Win=62592 Len=17898 TSval=412597563 TSecr=4125415352</div><div class="m" style="left:63.21px;top:690.44px;line-height:26.62px;color:#12272e;">260082</div><div class="m" style="left:163.20px;top:690.44px;line-height:26.62px;color:#12272e;">2023-04-09 04:03:29.478523</div><div class="m" style="left:527.20px;top:690.44px;line-height:26.62px;color:#12272e;">172.31.91.35</div><div class="m" style="left:730.20px;top:690.44px;line-height:26.62px;color:#12272e;">172.31.82.1</div><div class="m" style="left:923.20px;top:690.44px;line-height:26.62px;color:#12272e;">TCP</div><div class="m" style="left:1106.57px;top:690.44px;line-height:26.62px;color:#12272e;">66</div><div class="m" style="left:1153.20px;top:690.44px;line-height:26.62px;color:#12272e;">60864 <span style="position:relative;top:-2px">→</span> 8000 [ACK] Seq=102 Ack=740405747 Win=3145728 Len=0 TSval=4125415353 TSecr=412597563</div><div class="m" style="left:63.21px;top:720.44px;line-height:26.62px;color:#12272e;">260083</div><div class="m" style="left:163.20px;top:720.44px;line-height:26.62px;color:#12272e;">2023-04-09 04:03:29.478638</div><div class="m" style="left:527.20px;top:720.44px;line-height:26.62px;color:#12272e;">172.31.82.1</div><div class="m" style="left:730.20px;top:720.44px;line-height:26.62px;color:#12272e;">172.31.91.35</div><div class="m" style="left:923.20px;top:720.44px;line-height:26.62px;color:#12272e;">TCP</div><div class="m" style="left:1066.92px;top:720.44px;line-height:26.62px;color:#12272e;">26913</div><div class="m" style="left:1153.20px;top:720.44px;line-height:26.62px;color:#12272e;">8000 <span style="position:relative;top:-2px">→</span> 60864 [PSH, ACK] Seq=740405747 Ack=102 Win=62592 Len=26847 TSval=412597563 TSecr=4125415352</div><div class="m" style="left:63.21px;top:750.44px;line-height:26.62px;color:#12272e;">260084</div><div class="m" style="left:163.20px;top:750.44px;line-height:26.62px;color:#12272e;">2023-04-09 04:03:29.478660</div><div class="m" style="left:527.20px;top:750.44px;line-height:26.62px;color:#12272e;">172.31.91.35</div><div class="m" style="left:730.20px;top:750.44px;line-height:26.62px;color:#12272e;">172.31.82.1</div><div class="m" style="left:923.20px;top:750.44px;line-height:26.62px;color:#12272e;">TCP</div><div class="m" style="left:1106.57px;top:750.44px;line-height:26.62px;color:#12272e;">66</div><div class="m" style="left:1153.20px;top:750.44px;line-height:26.62px;color:#12272e;">60864 <span style="position:relative;top:-2px">→</span> 8000 [ACK] Seq=102 Ack=740432594 Win=3145728 Len=0 TSval=4125415353 TSecr=412597563</div><div class="m" style="left:63.21px;top:780.44px;line-height:26.62px;color:#12272e;">260085</div><div class="m" style="left:163.20px;top:780.44px;line-height:26.62px;color:#12272e;">2023-04-09 04:03:29.478752</div><div class="m" style="left:527.20px;top:780.44px;line-height:26.62px;color:#12272e;">172.31.82.1</div><div class="m" style="left:730.20px;top:780.44px;line-height:26.62px;color:#12272e;">172.31.91.35</div><div class="m" style="left:923.20px;top:780.44px;line-height:26.62px;color:#12272e;">TCP</div><div class="m" style="left:1066.92px;top:780.44px;line-height:26.62px;color:#12272e;">17964</div><div class="m" style="left:1153.20px;top:780.44px;line-height:26.62px;color:#12272e;">8000 <span style="position:relative;top:-2px">→</span> 60864 [PSH, ACK] Seq=740432594 Ack=102 Win=62592 Len=17898 TSval=412597564 TSecr=4125415352</div><div class="a" style="left:0;top:809px;width:2782px;height:30px;background:#a0a0a0"></div><div class="m" style="left:63.21px;top:810.44px;line-height:26.62px;color:#12272e;">260086</div><div class="m" style="left:163.20px;top:810.44px;line-height:26.62px;color:#12272e;">2023-04-09 04:03:29.478774</div><div class="m" style="left:527.20px;top:810.44px;line-height:26.62px;color:#12272e;">172.31.82.1</div><div class="m" style="left:730.20px;top:810.44px;line-height:26.62px;color:#12272e;">172.31.91.35</div><div class="m" style="left:923.20px;top:810.44px;line-height:26.62px;color:#12272e;">TCP</div><div class="m" style="left:1066.92px;top:810.44px;line-height:26.62px;color:#12272e;">13721</div><div class="m" style="left:1153.20px;top:810.44px;line-height:26.62px;color:#12272e;">8000 <span style="position:relative;top:-2px">→</span> 60864 [FIN, PSH, ACK] Seq=740450492 Ack=102 Win=62592 Len=13655 TSval=412597564 TSecr=4125415352</div><div class="m" style="left:63.21px;top:840.44px;line-height:26.62px;color:#12272e;">260087</div><div class="m" style="left:163.20px;top:840.44px;line-height:26.62px;color:#12272e;">2023-04-09 04:03:29.478786</div><div class="m" style="left:527.20px;top:840.44px;line-height:26.62px;color:#12272e;">172.31.91.35</div><div class="m" style="left:730.20px;top:840.44px;line-height:26.62px;color:#12272e;">172.31.82.1</div><div class="m" style="left:923.20px;top:840.44px;line-height:26.62px;color:#12272e;">TCP</div><div class="m" style="left:1106.57px;top:840.44px;line-height:26.62px;color:#12272e;">66</div><div class="m" style="left:1153.20px;top:840.44px;line-height:26.62px;color:#12272e;">60864 <span style="position:relative;top:-2px">→</span> 8000 [ACK] Seq=102 Ack=740464148 Win=3145728 Len=0 TSval=4125415353 TSecr=412597564</div><div class="a" style="left:0;top:869px;width:2782px;height:30px;background:#0b4ad8"></div><div class="m" style="left:63.21px;top:870.44px;line-height:26.62px;color:#ffffff;">260163</div><div class="m" style="left:163.20px;top:870.44px;line-height:26.62px;color:#ffffff;">2023-04-09 04:03:29.482176</div><div class="m" style="left:527.20px;top:870.44px;line-height:26.62px;color:#ffffff;">172.31.91.35</div><div class="m" style="left:730.20px;top:870.44px;line-height:26.62px;color:#ffffff;">172.31.82.1</div><div class="m" style="left:923.20px;top:870.44px;line-height:26.62px;color:#ffffff;">TCP</div><div class="m" style="left:1106.57px;top:870.44px;line-height:26.62px;color:#ffffff;">66</div><div class="m" style="left:1153.20px;top:870.44px;line-height:26.62px;color:#ffffff;">60864 <span style="position:relative;top:-2px">→</span> 8000 [FIN, ACK] Seq=102 Ack=740464148 Win=3145728 Len=0 TSval=4125415356 TSecr=412597564</div><div class="m" style="left:63.21px;top:900.44px;line-height:26.62px;color:#12272e;">260169</div><div class="m" style="left:163.20px;top:900.44px;line-height:26.62px;color:#12272e;">2023-04-09 04:03:29.482612</div><div class="m" style="left:527.20px;top:900.44px;line-height:26.62px;color:#12272e;">172.31.82.1</div><div class="m" style="left:730.20px;top:900.44px;line-height:26.62px;color:#12272e;">172.31.91.35</div><div class="m" style="left:923.20px;top:900.44px;line-height:26.62px;color:#12272e;">TCP</div><div class="m" style="left:1106.57px;top:900.44px;line-height:26.62px;color:#12272e;">66</div><div class="m" style="left:1153.20px;top:900.44px;line-height:26.62px;color:#12272e;">8000 <span style="position:relative;top:-2px">→</span> 60864 [ACK] Seq=740464148 Ack=103 Win=62592 Len=0 TSval=412597568 TSecr=4125415356</div><div class="a" style="left:14px;top:29px;width:2px;height:885px;background:#aab0b8"></div><div class="a" style="left:14px;top:869px;width:2px;height:30px;background:#9db5ea"></div><div class="a" style="left:14px;top:912.5px;width:14px;height:2px;background:#aab0b8"></div></div><div class="a" style="left:2784px;top:216px;width:62px;height:894px;background:#e7e6ff;border-left:1px solid #9a9a9a;border-right:1px solid #a9a9a9"><svg width="60" height="894" viewBox="0 0 60 894" style="position:absolute;left:0;top:0"><rect x="0" y="99.0" width="60" height="196.0" fill="#f6f6ff"/><rect x="0" y="99.0" width="60" height="1.3" fill="#12272e"/><rect x="0" y="103.4" width="60" height="1.3" fill="#12272e"/><rect x="0" y="107.8" width="60" height="1.3" fill="#12272e"/><rect x="0" y="112.2" width="60" height="1.3" fill="#12272e"/><rect x="0" y="116.6" width="60" height="1.3" fill="#12272e"/><rect x="0" y="121.0" width="60" height="1.3" fill="#12272e"/><rect x="0" y="125.4" width="60" height="1.3" fill="#12272e"/><rect x="0" y="129.8" width="60" height="1.3" fill="#12272e"/><rect x="0" y="134.2" width="60" height="1.3" fill="#12272e"/><rect x="0" y="138.6" width="60" height="1.3" fill="#12272e"/><rect x="0" y="143.0" width="60" height="1.3" fill="#12272e"/><rect x="0" y="147.4" width="60" height="1.3" fill="#12272e"/><rect x="0" y="151.8" width="60" height="1.3" fill="#12272e"/><rect x="0" y="156.2" width="60" height="1.3" fill="#12272e"/><rect x="0" y="160.6" width="60" height="1.3" fill="#12272e"/><rect x="0" y="165.0" width="60" height="1.3" fill="#12272e"/><rect x="0" y="169.4" width="60" height="1.3" fill="#12272e"/><rect x="0" y="173.8" width="60" height="1.3" fill="#12272e"/><rect x="0" y="178.2" width="60" height="1.3" fill="#12272e"/><rect x="0" y="182.6" width="60" height="1.3" fill="#12272e"/><rect x="0" y="187.0" width="60" height="1.3" fill="#12272e"/><rect x="0" y="191.4" width="60" height="1.3" fill="#12272e"/><rect x="0" y="195.8" width="60" height="1.3" fill="#12272e"/><rect x="0" y="200.2" width="60" height="1.3" fill="#12272e"/><rect x="0" y="204.6" width="60" height="1.3" fill="#12272e"/><rect x="0" y="209.0" width="60" height="1.3" fill="#12272e"/><rect x="0" y="213.4" width="60" height="1.3" fill="#12272e"/><rect x="0" y="217.8" width="60" height="1.3" fill="#12272e"/><rect x="0" y="222.2" width="60" height="1.3" fill="#12272e"/><rect x="0" y="226.6" width="60" height="1.3" fill="#12272e"/><rect x="0" y="231.0" width="60" height="1.3" fill="#12272e"/><rect x="0" y="148.0" width="60" height="1.8" fill="#12272e"/><rect x="0" y="170.5" width="60" height="4" fill="#12272e"/><rect x="0" y="234.0" width="60" height="1.3" fill="#12272e"/><rect x="0" y="237.0" width="60" height="1.3" fill="#12272e"/><rect x="0" y="240.0" width="60" height="1.3" fill="#12272e"/><rect x="0" y="243.0" width="60" height="1.3" fill="#12272e"/><rect x="0" y="246.0" width="60" height="1.3" fill="#12272e"/><rect x="0" y="249.0" width="60" height="1.3" fill="#12272e"/><rect x="0" y="252.0" width="60" height="1.3" fill="#12272e"/><rect x="0" y="255.0" width="60" height="1.3" fill="#12272e"/><rect x="0" y="258.0" width="60" height="1.3" fill="#12272e"/><rect x="0" y="261.0" width="60" height="1.3" fill="#12272e"/><rect x="0" y="264.0" width="60" height="1.3" fill="#12272e"/><rect x="0" y="267.0" width="60" height="1.3" fill="#12272e"/><rect x="0" y="270.0" width="60" height="1.3" fill="#12272e"/><rect x="0" y="273.0" width="60" height="1.3" fill="#12272e"/><rect x="0" y="276.0" width="60" height="1.3" fill="#12272e"/><rect x="0" y="279.0" width="60" height="1.3" fill="#12272e"/><rect x="0" y="282.0" width="60" height="1.3" fill="#12272e"/><rect x="0" y="285.0" width="60" height="1.3" fill="#12272e"/><rect x="0" y="288.0" width="60" height="1.3" fill="#12272e"/><rect x="0" y="291.0" width="60" height="1.3" fill="#12272e"/><rect x="0" y="294.0" width="60" height="1.3" fill="#12272e"/><rect x="0" y="292.0" width="60" height="2.5" fill="#12272e"/><rect x="0" y="544.0" width="60" height="316.0" fill="#f6f6ff"/><rect x="0" y="544.0" width="60" height="1.3" fill="#12272e"/><rect x="0" y="548.6" width="60" height="1.3" fill="#12272e"/><rect x="0" y="553.2" width="60" height="1.3" fill="#12272e"/><rect x="0" y="557.8" width="60" height="1.3" fill="#12272e"/><rect x="0" y="562.4" width="60" height="1.3" fill="#12272e"/><rect x="0" y="567.0" width="60" height="1.3" fill="#12272e"/><rect x="0" y="571.6" width="60" height="1.3" fill="#12272e"/><rect x="0" y="576.2" width="60" height="1.3" fill="#12272e"/><rect x="0" y="580.8" width="60" height="1.3" fill="#12272e"/><rect x="0" y="585.4" width="60" height="1.3" fill="#12272e"/><rect x="0" y="590.0" width="60" height="1.3" fill="#12272e"/><rect x="0" y="594.6" width="60" height="1.3" fill="#12272e"/><rect x="0" y="599.2" width="60" height="1.3" fill="#12272e"/><rect x="0" y="603.8" width="60" height="1.3" fill="#12272e"/><rect x="0" y="608.4" width="60" height="1.3" fill="#12272e"/><rect x="0" y="613.0" width="60" height="1.3" fill="#12272e"/><rect x="0" y="617.6" width="60" height="1.3" fill="#12272e"/><rect x="0" y="622.2" width="60" height="1.3" fill="#12272e"/><rect x="0" y="626.8" width="60" height="1.3" fill="#12272e"/><rect x="0" y="631.4" width="60" height="1.3" fill="#12272e"/><rect x="0" y="636.0" width="60" height="1.3" fill="#12272e"/><rect x="0" y="640.0" width="60" height="1.3" fill="#12272e"/><rect x="0" y="643.0" width="60" height="1.3" fill="#12272e"/><rect x="0" y="646.0" width="60" height="1.3" fill="#12272e"/><rect x="0" y="649.0" width="60" height="1.3" fill="#12272e"/><rect x="0" y="652.0" width="60" height="1.3" fill="#12272e"/><rect x="0" y="655.0" width="60" height="1.3" fill="#12272e"/><rect x="0" y="658.0" width="60" height="1.3" fill="#12272e"/><rect x="0" y="661.0" width="60" height="1.3" fill="#12272e"/><rect x="0" y="664.0" width="60" height="1.3" fill="#12272e"/><rect x="0" y="667.0" width="60" height="1.3" fill="#12272e"/><rect x="0" y="670.0" width="60" height="1.3" fill="#12272e"/><rect x="0" y="673.0" width="60" height="1.3" fill="#12272e"/><rect x="0" y="676.0" width="60" height="1.3" fill="#12272e"/><rect x="0" y="679.0" width="60" height="1.3" fill="#12272e"/><rect x="0" y="682.0" width="60" height="1.3" fill="#12272e"/><rect x="0" y="685.0" width="60" height="1.3" fill="#12272e"/><rect x="0" y="688.0" width="60" height="1.3" fill="#12272e"/><rect x="0" y="695.0" width="60" height="2.5" fill="#12272e"/><rect x="0" y="698.0" width="60" height="1.3" fill="#12272e"/><rect x="0" y="702.2" width="60" height="1.3" fill="#12272e"/><rect x="0" y="706.4" width="60" height="1.3" fill="#12272e"/><rect x="0" y="710.6" width="60" height="1.3" fill="#12272e"/><rect x="0" y="714.8" width="60" height="1.3" fill="#12272e"/><rect x="0" y="719.0" width="60" height="1.3" fill="#12272e"/><rect x="0" y="723.2" width="60" height="1.3" fill="#12272e"/><rect x="0" y="727.4" width="60" height="1.3" fill="#12272e"/><rect x="0" y="731.6" width="60" height="1.3" fill="#12272e"/><rect x="0" y="735.8" width="60" height="1.3" fill="#12272e"/><rect x="0" y="740.0" width="60" height="1.3" fill="#12272e"/><rect x="0" y="744.2" width="60" height="1.3" fill="#12272e"/><rect x="0" y="748.4" width="60" height="1.3" fill="#12272e"/><rect x="0" y="752.6" width="60" height="1.3" fill="#12272e"/><rect x="0" y="756.8" width="60" height="1.3" fill="#12272e"/><rect x="0" y="761.0" width="60" height="1.3" fill="#12272e"/><rect x="0" y="765.2" width="60" height="1.3" fill="#12272e"/><rect x="0" y="769.4" width="60" height="1.3" fill="#12272e"/><rect x="0" y="773.6" width="60" height="1.3" fill="#12272e"/><rect x="0" y="777.8" width="60" height="1.3" fill="#12272e"/><rect x="0" y="782.0" width="60" height="1.3" fill="#12272e"/><rect x="0" y="785.0" width="60" height="2" fill="#12272e"/><rect x="0" y="798.0" width="60" height="2.5" fill="#12272e"/><rect x="0" y="801.5" width="60" height="3" fill="#12272e"/><rect x="0" y="806.0" width="60" height="1.6" fill="#12272e"/><rect x="0" y="809.4" width="60" height="1.6" fill="#12272e"/><rect x="0" y="812.8" width="60" height="1.6" fill="#12272e"/><rect x="0" y="816.2" width="60" height="1.6" fill="#12272e"/><rect x="0" y="819.6" width="60" height="1.6" fill="#12272e"/><rect x="0" y="823.0" width="60" height="1.6" fill="#12272e"/><rect x="0" y="826.4" width="60" height="1.6" fill="#12272e"/><rect x="0" y="829.8" width="60" height="1.6" fill="#12272e"/><rect x="0" y="833.2" width="60" height="1.6" fill="#12272e"/><rect x="0" y="836.6" width="60" height="1.6" fill="#12272e"/><rect x="0" y="840.0" width="60" height="1.6" fill="#12272e"/><rect x="0" y="843.4" width="60" height="1.6" fill="#12272e"/><rect x="0" y="846.8" width="60" height="1.6" fill="#12272e"/><rect x="0" y="850.0" width="60" height="6" fill="#12272e"/><rect x="0" y="857.0" width="60" height="1.3" fill="#12272e"/><rect x="0" y="888" width="60" height="1.5" fill="#a0a0a0"/><rect x="0" y="890" width="60" height="2.5" fill="#a6cdf6"/></svg></div><div class="a" style="left:2846px;top:216px;width:32px;height:894px;background:#f9f9f9;border-left:1px solid #ececec;border-right:1px solid #eaeaea"></div><div class="a" style="left:2856px;top:1068px;width:16px;height:36px;border-radius:8px;background:#808080"></div><div class="a" style="left:2878px;top:181px;width:2px;height:1401px;background:linear-gradient(90deg,#b3b3b3 50%,#d4d4d4 50%)"></div><div class="a" style="left:2px;top:181px;width:2876px;height:35px;background:#ebebeb"></div><div class="a" style="left:154px;top:185px;width:2px;height:26px;background:#c8c8c8"></div><div class="a" style="left:518px;top:185px;width:2px;height:26px;background:#c8c8c8"></div><div class="a" style="left:720px;top:185px;width:2px;height:26px;background:#c8c8c8"></div><div class="a" style="left:914px;top:185px;width:2px;height:26px;background:#c8c8c8"></div><div class="a" style="left:1044px;top:185px;width:2px;height:26px;background:#c8c8c8"></div><div class="a" style="left:1144px;top:185px;width:2px;height:26px;background:#c8c8c8"></div><div class="t" style="left:9.50px;top:183.06px;font-size:27px;line-height:30.16px;color:#111;font-weight:normal;letter-spacing:0.3px;">No.</div><div class="t" style="left:163.50px;top:183.06px;font-size:27px;line-height:30.16px;color:#111;font-weight:normal;letter-spacing:0.3px;">Time</div><div class="t" style="left:527.00px;top:183.06px;font-size:27px;line-height:30.16px;color:#111;font-weight:normal;letter-spacing:0.3px;">Source</div><div class="t" style="left:729.50px;top:183.06px;font-size:27px;line-height:30.16px;color:#111;font-weight:normal;letter-spacing:0.3px;">Destination</div><div class="t" style="left:922.00px;top:183.06px;font-size:27px;line-height:30.16px;color:#111;font-weight:normal;letter-spacing:0.3px;">Protocol</div><div class="t" style="left:1052.00px;top:183.06px;font-size:27px;line-height:30.16px;color:#111;font-weight:normal;letter-spacing:0.3px;">Length</div><div class="t" style="left:1152.00px;top:183.06px;font-size:27px;line-height:30.16px;color:#111;font-weight:normal;letter-spacing:0.3px;">Info</div><svg class="a" style="left:128px;top:194px" width="13" height="9" viewBox="0 0 13 9"><path d="M1.5 7.5 L6.5 2 L11.5 7.5" fill="none" stroke="#111" stroke-width="2.2"/></svg><div class="a" style="left:0;top:1110px;width:2880px;height:16px;background:#d4d4d4;border-top:1px solid #b4b4b4"></div><div class="a" style="left:1434px;top:1112px;width:12px;height:12px;border-radius:50%;background:#bcbcbc"></div><div class="a" style="left:0;top:1126px;width:1696px;height:457px;background:#a8a8a8"></div><div class="a" style="left:2px;top:1128px;width:1692px;height:453px;background:#fff;overflow:hidden"><div class="a" style="left:40px;top:0px;width:1700px;height:30px;background:#ebebeb"></div><svg class="a" style="left:17px;top:5px" width="14" height="20" viewBox="0 0 14 20"><path d="M3 3 L11 10 L3 17" fill="none" stroke="#b4b4b4" stroke-width="2.6"/></svg><div class="m" style="left:49.70px;top:3.44px;line-height:26.62px;color:#1c1c1c;">Ethernet II, Src: 12:69:98:e5:3a:ef (12:69:98:e5:3a:ef), Dst: 12:e7:8e:72:22:d1 (12:e7:8e:72:22:d1)</div><div class="a" style="left:40px;top:30px;width:1700px;height:30px;background:#ebebeb"></div><svg class="a" style="left:17px;top:35px" width="14" height="20" viewBox="0 0 14 20"><path d="M3 3 L11 10 L3 17" fill="none" stroke="#b4b4b4" stroke-width="2.6"/></svg><div class="m" style="left:49.70px;top:33.44px;line-height:26.62px;color:#1c1c1c;">Internet Protocol Version 4, Src: 172.31.91.35, Dst: 172.31.82.1</div><div class="a" style="left:40px;top:60px;width:1700px;height:30px;background:#a0ffff"></div><svg class="a" style="left:11px;top:68px" width="20" height="14" viewBox="0 0 20 14"><path d="M3 3 L10 11 L17 3" fill="none" stroke="#b4b4b4" stroke-width="2.6"/></svg><div class="m" style="left:49.70px;top:63.44px;line-height:26.62px;color:#1c1c1c;">Transmission Control Protocol, Src Port: 60864, Dst Port: 8000, Seq: 102, Ack: 2147483858, Len: 0</div><div class="m" style="left:89.70px;top:93.44px;line-height:26.62px;color:#1c1c1c;">Source Port: 60864</div><div class="m" style="left:89.70px;top:123.44px;line-height:26.62px;color:#1c1c1c;">Destination Port: 8000</div><div class="m" style="left:89.70px;top:153.44px;line-height:26.62px;color:#1c1c1c;">[Stream index: 8]</div><div class="m" style="left:89.70px;top:183.44px;line-height:26.62px;color:#1c1c1c;">[Conversation completeness: Complete, WITH_DATA (63)]</div><div class="m" style="left:89.70px;top:213.44px;line-height:26.62px;color:#1c1c1c;">[TCP Segment Len: 0]</div><div class="m" style="left:89.70px;top:243.44px;line-height:26.62px;color:#1c1c1c;">Sequence Number: 102    (relative sequence number)</div><div class="m" style="left:89.70px;top:273.44px;line-height:26.62px;color:#1c1c1c;">Sequence Number (raw): 928259982</div><div class="m" style="left:89.70px;top:303.44px;line-height:26.62px;color:#1c1c1c;">[Next Sequence Number: 103    (relative sequence number)]</div><div class="m" style="left:89.70px;top:333.44px;line-height:26.62px;color:#1c1c1c;">Acknowledgment Number: 2147483858    (relative ack number)</div><div class="m" style="left:89.70px;top:363.44px;line-height:26.62px;color:#1c1c1c;">Acknowledgment number (raw): 3850118571</div><div class="m" style="left:89.70px;top:393.44px;line-height:26.62px;color:#1c1c1c;">1000 .... = Header Length: 32 bytes (8)</div><div class="a" style="left:80px;top:420px;width:1700px;height:30px;background:#a0ffff"></div><svg class="a" style="left:57px;top:425px" width="14" height="20" viewBox="0 0 14 20"><path d="M3 3 L11 10 L3 17" fill="none" stroke="#b4b4b4" stroke-width="2.6"/></svg><div class="m" style="left:89.70px;top:423.44px;line-height:26.62px;color:#1c1c1c;">Flags: 0x011 (FIN, ACK)</div></div><div class="a" style="left:1696px;top:1126px;width:14px;height:457px;background:#d4d4d4"></div><div class="a" style="left:1697px;top:1348px;width:11px;height:11px;border-radius:50%;background:#bcbcbc"></div><div class="a" style="left:1710px;top:1126px;width:1169px;height:456px;background:#a8a8a8"></div><div class="a" style="left:1712px;top:1128px;width:1166px;height:452px;background:#fff;overflow:hidden"><div class="a" style="left:0;top:0;width:80px;height:452px;background:#ebebeb"></div></div><div class="a" style="left:2042px;top:1180px;width:160px;height:26px;background:#a8cdfa"></div><div class="a" style="left:2558px;top:1180px;width:68px;height:26px;background:#a8cdfa"></div><div class="m" style="left:1724.20px;top:1129.44px;line-height:26.62px;color:#9a9a9a;">0000</div><div class="m" style="left:1803.20px;top:1129.44px;line-height:26.62px;color:#1c1c1c;">12 e7 8e 72 22 d1 12 69  98 e5 3a ef 08 00 45 00</div><div class="m" style="left:2478.20px;top:1129.44px;line-height:26.62px;color:#1c1c1c;"><span style="color:#a0a0a0">·</span><span style="color:#a0a0a0">·</span><span style="color:#a0a0a0">·</span>r"<span style="color:#a0a0a0">·</span><span style="color:#a0a0a0">·</span>i <span style="color:#a0a0a0">·</span><span style="color:#a0a0a0">·</span>:<span style="color:#a0a0a0">·</span><span style="color:#a0a0a0">·</span><span style="color:#a0a0a0">·</span>E<span style="color:#a0a0a0">·</span></div><div class="m" style="left:1724.20px;top:1155.44px;line-height:26.62px;color:#9a9a9a;">0010</div><div class="m" style="left:1803.20px;top:1155.44px;line-height:26.62px;color:#1c1c1c;">00 34 a0 d6 40 00 7f 06  55 8a ac 1f 5b 23 ac 1f</div><div class="m" style="left:2478.20px;top:1155.44px;line-height:26.62px;color:#1c1c1c;"><span style="color:#a0a0a0">·</span>4<span style="color:#a0a0a0">·</span><span style="color:#a0a0a0">·</span>@<span style="color:#a0a0a0">·</span><span style="color:#a0a0a0">·</span><span style="color:#a0a0a0">·</span> U<span style="color:#a0a0a0">·</span><span style="color:#a0a0a0">·</span><span style="color:#a0a0a0">·</span>[#<span style="color:#a0a0a0">·</span><span style="color:#a0a0a0">·</span></div><div class="m" style="left:1724.20px;top:1181.44px;line-height:26.62px;color:#474747;">0020</div><div class="m" style="left:1803.20px;top:1181.44px;line-height:26.62px;color:#1c1c1c;">52 01 ed c0 1f 40 37 54  1f 8e e5 7c 25 ab 80 11</div><div class="m" style="left:2478.20px;top:1181.44px;line-height:26.62px;color:#1c1c1c;">R<span style="color:#a0a0a0">·</span><span style="color:#a0a0a0">·</span><span style="color:#a0a0a0">·</span><span style="color:#a0a0a0">·</span>@7T ··<span style="color:#a0a0a0">·</span>|%<span style="color:#a0a0a0">·</span><span style="color:#a0a0a0">·</span><span style="color:#a0a0a0">·</span></div><div class="m" style="left:1724.20px;top:1207.44px;line-height:26.62px;color:#9a9a9a;">0030</div><div class="m" style="left:1803.20px;top:1207.44px;line-height:26.62px;color:#1c1c1c;">60 00 05 8a 00 00 01 01  08 0a f5 e4 d7 bc 18 97</div><div class="m" style="left:2478.20px;top:1207.44px;line-height:26.62px;color:#1c1c1c;">`<span style="color:#a0a0a0">·</span><span style="color:#a0a0a0">·</span><span style="color:#a0a0a0">·</span><span style="color:#a0a0a0">·</span><span style="color:#a0a0a0">·</span><span style="color:#a0a0a0">·</span><span style="color:#a0a0a0">·</span> <span style="color:#a0a0a0">·</span><span style="color:#a0a0a0">·</span><span style="color:#a0a0a0">·</span><span style="color:#a0a0a0">·</span><span style="color:#a0a0a0">·</span><span style="color:#a0a0a0">·</span><span style="color:#a0a0a0">·</span><span style="color:#a0a0a0">·</span></div><div class="m" style="left:1724.20px;top:1233.44px;line-height:26.62px;color:#9a9a9a;">0040</div><div class="m" style="left:1803.20px;top:1233.44px;line-height:26.62px;color:#1c1c1c;">bd 3c  </div><div class="m" style="left:2478.20px;top:1233.44px;line-height:26.62px;color:#1c1c1c;"><span style="color:#a0a0a0">·</span>&lt;</div><div class="a" style="left:0;top:1582px;width:2880px;height:54px;background:linear-gradient(#e6e6e6,#a3a3a3);border-top:1px solid #7a7a7a"></div><div class="a" style="left:20px;top:1594px;width:28px;height:28px;border-radius:50%;background:radial-gradient(circle at 40% 35%,#e8e48a,#d8d45a);border:2px solid #74743a"></div><div class="a" style="left:71px;top:1593px;width:28px;height:29px"><svg width="28" height="29" viewBox="0 0 28 29"><rect x="0.5" y="1" width="21" height="27.5" fill="#eeeee6" stroke="#b4b4b0" stroke-width="0.8"/><path d="M0.9,1.4 H18.5 Q20.6,1.4 20.6,3.5 V8.2 H0.9 Z" fill="#2f9ce0"/><path d="M5,8.2 C5,5.5 6.6,3.6 9.6,3 C8.6,4.6 8.4,6.4 9.4,8.2 Z" fill="#eef2f4"/><text x="11" y="14.6" text-anchor="middle" font-family="Liberation Mono" font-size="5.6" font-weight="bold" fill="#a6a6a0">01010</text><text x="11" y="20.4" text-anchor="middle" font-family="Liberation Mono" font-size="5.6" font-weight="bold" fill="#a6a6a0">01101</text><text x="11" y="26.2" text-anchor="middle" font-family="Liberation Mono" font-size="5.6" font-weight="bold" fill="#a6a6a0">01110</text><g transform="translate(7.6,21) rotate(-45)"><path d="M-1,-4.4 H27.5 V4.4 H-1 Z" fill="#fff" opacity="0.6"/><path d="M0,0 L6.8,-3.3 L6.8,3.3 Z" fill="#000"/><rect x="8" y="-3.3" width="14.5" height="6.6" fill="#555753"/><path d="M23.6,-3.3 H25 Q27.2,-3.3 27.2,0 Q27.2,3.3 25,3.3 H23.6 Z" fill="#5f605c"/></g></svg></div><div class="t" style="left:139.00px;top:1596.63px;font-size:22.5px;line-height:25.14px;color:#111;font-weight:normal;letter-spacing:0.9px;">client.pcap</div><div class="a" style="left:1887px;top:1605px;width:12px;height:12px;border-radius:50%;background:#aaaaaa"></div><div class="t" style="left:1921.00px;top:1597.63px;font-size:22.5px;line-height:25.14px;color:#111;font-weight:normal;letter-spacing:0.9px;">Packets: 260294 · Displayed: 256044 (98.4%)</div><div class="a" style="left:2678px;top:1605px;width:12px;height:12px;border-radius:50%;background:#aaaaaa"></div><div class="t" style="left:2713.00px;top:1597.63px;font-size:22.5px;line-height:25.14px;color:#111;font-weight:normal;letter-spacing:0.6px;">Profile: Default</div></div></body></html>
